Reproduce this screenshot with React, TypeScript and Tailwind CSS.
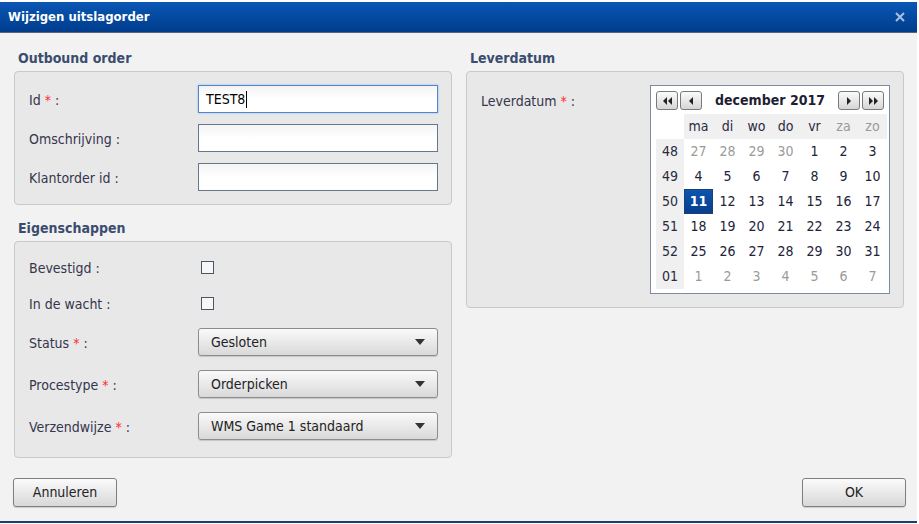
import type { ReactNode } from "react";

const weeks: { wk: string; days: { d: number; muted?: boolean; sel?: boolean }[] }[] = [
  { wk: "48", days: [{ d: 27, muted: true }, { d: 28, muted: true }, { d: 29, muted: true }, { d: 30, muted: true }, { d: 1 }, { d: 2 }, { d: 3 }] },
  { wk: "49", days: [{ d: 4 }, { d: 5 }, { d: 6 }, { d: 7 }, { d: 8 }, { d: 9 }, { d: 10 }] },
  { wk: "50", days: [{ d: 11, sel: true }, { d: 12 }, { d: 13 }, { d: 14 }, { d: 15 }, { d: 16 }, { d: 17 }] },
  { wk: "51", days: [{ d: 18 }, { d: 19 }, { d: 20 }, { d: 21 }, { d: 22 }, { d: 23 }, { d: 24 }] },
  { wk: "52", days: [{ d: 25 }, { d: 26 }, { d: 27 }, { d: 28 }, { d: 29 }, { d: 30 }, { d: 31 }] },
  { wk: "01", days: [1, 2, 3, 4, 5, 6, 7].map((d) => ({ d, muted: true })) },
];

const dayNames = [
  { n: "ma" }, { n: "di" }, { n: "wo" }, { n: "do" }, { n: "vr" }, { n: "za", weekend: true }, { n: "zo", weekend: true },
];

function Label({ text, required }: { text: string; required?: boolean }) {
  return (
    <span className="w-[169px] shrink-0 pt-[2px] text-[#35354d]">
      {text}
      {required && <span className="text-[#ff2b2b]"> *</span>} :
    </span>
  );
}

function Section({ title, children, className = "" }: { title: string; children: ReactNode; className?: string }) {
  return (
    <div className="flex flex-col">
      <div className="h-[20px] pl-[4px] text-[14px] font-bold leading-[20px] text-[#3b4d6e]">{title}</div>
      <div className={`mt-[3px] rounded-[4px] border border-[#c9c9c9] bg-[#e8e8e8] pl-[14px] pr-[13px] ${className}`}>{children}</div>
    </div>
  );
}

function TextInput({ value, focused }: { value?: string; focused?: boolean }) {
  return (
    <div
      className={`flex h-[28px] w-[240px] items-center border bg-gradient-to-b from-[#f4f4f4] via-white to-white px-[7px] ${
        focused ? "border-[#4f86cf] shadow-[0_0_2px_#8fb6e8]" : "border-[#68768c]"
      }`}
    >
      {value}
      {focused && <span className="ml-[1px] h-[17px] w-px bg-black" />}
    </div>
  );
}

function Select({ value }: { value: string }) {
  return (
    <div className="flex h-[28px] w-[240px] items-center justify-between rounded-[3px] border border-[#8d8d8d] bg-gradient-to-b from-[#fafafa] to-[#d9d9d9] pl-[12px] pr-[12px] shadow-[0_1px_1px_rgba(0,0,0,0.15)]">
      <span className="text-[#222]">{value}</span>
      <svg width="10" height="6" viewBox="0 0 10 6">
        <path d="M0 0h10L5 6z" fill="#333" />
      </svg>
    </div>
  );
}

function Checkbox() {
  return <span className="ml-[3px] block h-[13px] w-[13px] border border-[#4a5568] bg-[#f6f6f6]" />;
}

function NavButton({ dir, double }: { dir: "l" | "r"; double?: boolean }) {
  const tri = (x: number) =>
    dir === "l" ? `M${x + 4} 0v8L${x} 4z` : `M${x} 0v8l4-4z`;
  return (
    <span className="flex h-[19px] w-[22px] items-center justify-center rounded-[3px] border border-[#7a7a7a] bg-gradient-to-b from-[#fbfbfb] to-[#d6d6d6]">
      <svg width={double ? 9 : 5} height="8" viewBox={`0 0 ${double ? 9 : 5} 8`}>
        <path d={double ? `${tri(0)} ${tri(5)}` : tri(0)} fill="#222" />
      </svg>
    </span>
  );
}

function Calendar() {
  return (
    <div className="w-[240px] border border-[#7c8aa2] bg-white px-[5px] pb-[4px] pt-[5px] text-[14px]">
      <div className="flex h-[21px] items-start">
        <div className="flex gap-[2px]">
          <NavButton dir="l" double />
          <NavButton dir="l" />
        </div>
        <div className="flex-1 text-center text-[14px] font-bold leading-[19px] text-[#1f1f33]">december 2017</div>
        <div className="flex gap-[2px]">
          <NavButton dir="r" />
          <NavButton dir="r" double />
        </div>
      </div>
      <div className="mt-[2px] grid grid-cols-[28px_repeat(7,29px)]">
        <div className="h-[25px]" />
        {dayNames.map((n) => (
          <div
            key={n.n}
            className={`flex h-[25px] items-center justify-center bg-[#f0f0f0] ${n.weekend ? "text-[#9a9a9a]" : "text-[#2a2a40]"}`}
          >
            {n.n}
          </div>
        ))}
        {weeks.map((w) => (
          <div key={w.wk} className="contents">
            <div className="flex h-[25px] items-center justify-center bg-[#f0f0f0] text-[#2a2a40]">{w.wk}</div>
            {w.days.map((c, i) => (
              <div
                key={i}
                className={`flex h-[25px] items-center justify-center ${
                  c.sel
                    ? "border border-[#1d3f78] bg-gradient-to-b from-[#0d55ad] to-[#063f8d] font-bold text-white"
                    : c.muted
                      ? "text-[#9a9a9a]"
                      : "text-[#22223a]"
                }`}
              >
                {c.d}
              </div>
            ))}
          </div>
        ))}
      </div>
    </div>
  );
}

function Button({ children }: { children: ReactNode }) {
  return (
    <button
      type="button"
      className="h-[29px] w-[104px] rounded-[3px] border border-[#7f7f7f] bg-gradient-to-b from-[#fbfbfb] to-[#d8d8d8] text-[14px] text-[#222] shadow-[0_1px_1px_rgba(0,0,0,0.15)]"
    >
      {children}
    </button>
  );
}

export default function App() {
  return (
    <div className="h-[524px] w-[919px] bg-white pt-[2px] font-['DejaVu_Sans_Condensed','DejaVu_Sans',sans-serif] text-[14px]">
      <div className="flex h-[521px] w-[917px] flex-col bg-[#f2f2f2] border-b-2 border-[#1c3f70]">
        {/* title bar */}
        <div className="flex h-[31px] shrink-0 items-center justify-between border-b border-[#5a6473] bg-gradient-to-b from-[#0b57b5] to-[#003c8c] pl-[8px] pr-[12px]">
          <span className="text-[13px] font-bold text-white">Wijzigen uitslagorder</span>
          <svg width="10" height="10" viewBox="0 0 10 10">
            <path d="M1 1l8 8M9 1l-8 8" stroke="#a9bfdc" strokeWidth="2" />
          </svg>
        </div>

        <div className="flex flex-1 gap-[14px] pl-[14px] pr-[13px] pt-[15px]">
          <div className="flex w-[438px] flex-col gap-[13px]">
            <Section title="Outbound order" className="flex flex-col gap-[11px] pb-[13px] pt-[13px]">
              <div className="flex h-[28px] items-center">
                <Label text="Id" required />
                <TextInput value="TEST8" focused />
              </div>
              <div className="flex h-[28px] items-center">
                <Label text="Omschrijving" />
                <TextInput />
              </div>
              <div className="flex h-[28px] items-center">
                <Label text="Klantorder id" />
                <TextInput />
              </div>
            </Section>

            <Section title="Eigenschappen" className="pb-[17px] pt-[7px]">
              <div className="flex h-[36px] items-center">
                <Label text="Bevestigd" />
                <Checkbox />
              </div>
              <div className="flex h-[36px] items-center">
                <Label text="In de wacht" />
                <Checkbox />
              </div>
              <div className="mt-[7px] flex flex-col gap-[14px]">
                <div className="flex h-[28px] items-center">
                  <Label text="Status" required />
                  <Select value="Gesloten" />
                </div>
                <div className="flex h-[28px] items-center">
                  <Label text="Procestype" required />
                  <Select value="Orderpicken" />
                </div>
                <div className="flex h-[28px] items-center">
                  <Label text="Verzendwijze" required />
                  <Select value="WMS Game 1 standaard" />
                </div>
              </div>
            </Section>
          </div>

          <div className="w-[438px]">
            <Section title="Leverdatum" className="flex pb-[13px] pl-[14px] pt-[13px]">
              <div className="flex flex-1 items-start pt-[6px]">
                <span className="w-[169px] shrink-0 text-[#35354d]">
                  Leverdatum<span className="text-[#ff2b2b]"> *</span> :
                </span>
              </div>
              <Calendar />
            </Section>
          </div>
        </div>

        <div className="flex justify-between pb-[14px] pl-[13px] pr-[11px]">
          <Button>Annuleren</Button>
          <Button>OK</Button>
        </div>
      </div>
    </div>
  );
}
